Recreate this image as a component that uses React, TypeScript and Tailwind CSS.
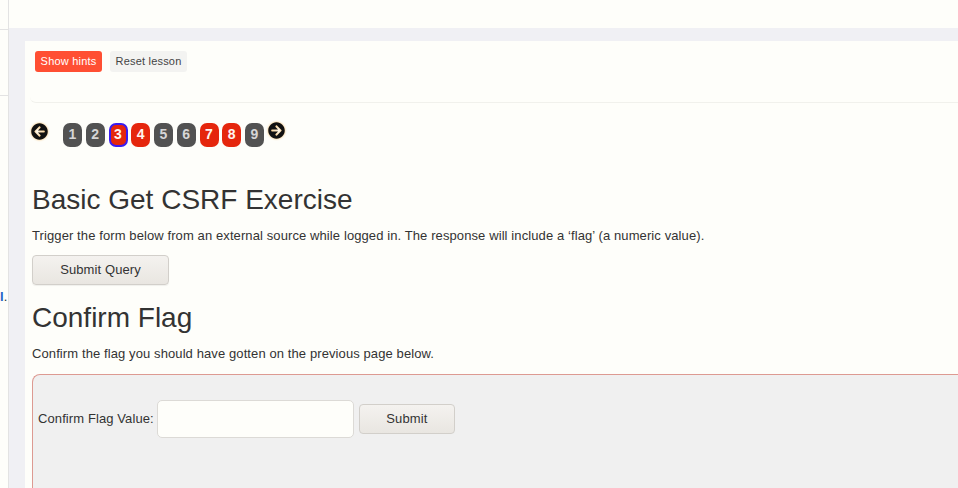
import { FaArrowCircleLeft, FaArrowCircleRight } from "react-icons/fa";

const pages = [
  { n: 1, red: false },
  { n: 2, red: false },
  { n: 3, red: true, current: true },
  { n: 4, red: true },
  { n: 5, red: false },
  { n: 6, red: false },
  { n: 7, red: true },
  { n: 8, red: true },
  { n: 9, red: false },
];

export default function App() {
  return (
    <div
      className="flex h-[488px] w-[958px] overflow-hidden bg-[#fefefa] text-[#333]"
      style={{ fontFamily: '"Liberation Sans", Arial, sans-serif' }}
    >
      {/* left sidebar sliver */}
      <div className="flex w-[9px] shrink-0 flex-col border-r border-[#e3e3e3] bg-[#fefefa]">
        <div className="h-[30px] border-b border-[#e3e3e3]" />
        <div className="h-[66px] border-b border-[#e3e3e3]" />
        <div className="mt-[194px] text-[13px] leading-[14px] whitespace-nowrap">
          <span className="font-bold text-[#1a62c6]">l</span>
          <span className="text-[#333]">.</span>
        </div>
      </div>

      <div className="flex flex-1 flex-col">
        <div className="h-[28px] shrink-0 bg-[#fefefa]" />
        <div className="flex flex-1 flex-col bg-[#f0f0f4] pl-[16px] pt-[13px]">
          <div className="flex flex-1 flex-col bg-[#fefefa] pl-[5px]">
            {/* lesson header */}
            <div className="h-[62px] shrink-0 rounded-l-md border-b border-[#f1f1ec]">
              <div className="flex gap-2 pl-[5px] pt-[10px]">
                <button className="h-[21px] w-[67px] rounded-[3px] bg-[#ff4f33] text-[11px] tracking-[0.2px] text-white">
                  Show hints
                </button>
                <button className="h-[21px] w-[77px] rounded-[3px] bg-[#f3f3f1] text-[11px] tracking-[0.2px] text-[#444]">
                  Reset lesson
                </button>
              </div>
            </div>

            {/* page navigation */}
            <div className="mt-[19px] flex h-[25px] items-center pl-[1px]">
              <FaArrowCircleLeft className="h-[17px] w-[17px] -translate-y-[3px] text-[#111] drop-shadow-[0_0_1px_#f4b860]" />
              <div className="ml-[15px] flex gap-[3.75px]">
                {pages.map((p) => (
                  <span
                    key={p.n}
                    className={
                      "flex h-[24px] w-[19px] items-center justify-center rounded-[7px] text-[14px] font-bold " +
                      (p.red ? "bg-[#e5260d] text-[#fff4f0]" : "bg-[#525252] text-[#d6d6d6]") +
                      (p.current ? " border-2 border-[#3a1cf0]" : "")
                    }
                  >
                    {p.n}
                  </span>
                ))}
              </div>
              <FaArrowCircleRight className="ml-[4px] h-[17px] w-[17px] -translate-y-[4px] text-[#111] drop-shadow-[0_0_1px_#f4b860]" />
            </div>

            {/* exercise */}
            <div className="flex flex-1 flex-col pl-[2px]">
              <h2 className="mt-[36px] text-[28px] leading-[34px] text-[#333]">Basic Get CSRF Exercise</h2>
              <p className="mt-[11px] text-[13px] leading-[15px] tracking-[0.1px]">
                Trigger the form below from an external source while logged in. The response will include a ‘flag’ (a
                numeric value).
              </p>
              <button className="mt-[12px] h-[30px] w-[137px] rounded-[4px] border border-[#d2cfca] bg-gradient-to-b from-[#f4f2ef] to-[#e9e6e1] text-[13px] tracking-[0.1px] text-[#333] shadow-[0_1px_1px_rgba(0,0,0,0.06)]">
                Submit Query
              </button>

              <h2 className="mt-[16px] text-[28px] leading-[34px] text-[#333]">Confirm Flag</h2>
              <p className="mt-[11px] text-[13px] leading-[15px] tracking-[0.1px]">
                Confirm the flag you should have gotten on the previous page below.
              </p>

              <div className="mt-[13px] flex-1 rounded-tl-[8px] border-l border-t border-[#dd9a92] bg-[#f0f0f0]">
                <div className="mt-[25px] flex items-center pl-[5px]">
                  <span className="text-[13px] tracking-[0.1px]">Confirm Flag Value:</span>
                  <input className="ml-[3px] h-[38px] w-[197px] rounded-[5px] border border-[#dcdad6] bg-[#fefefa] outline-none" />
                  <button className="ml-[5px] h-[30px] w-[96px] rounded-[4px] border border-[#d2cfca] bg-gradient-to-b from-[#f4f2ef] to-[#e9e6e1] text-[13px] tracking-[0.1px] text-[#333]">
                    Submit
                  </button>
                </div>
              </div>
            </div>
          </div>
        </div>
      </div>
    </div>
  );
}
